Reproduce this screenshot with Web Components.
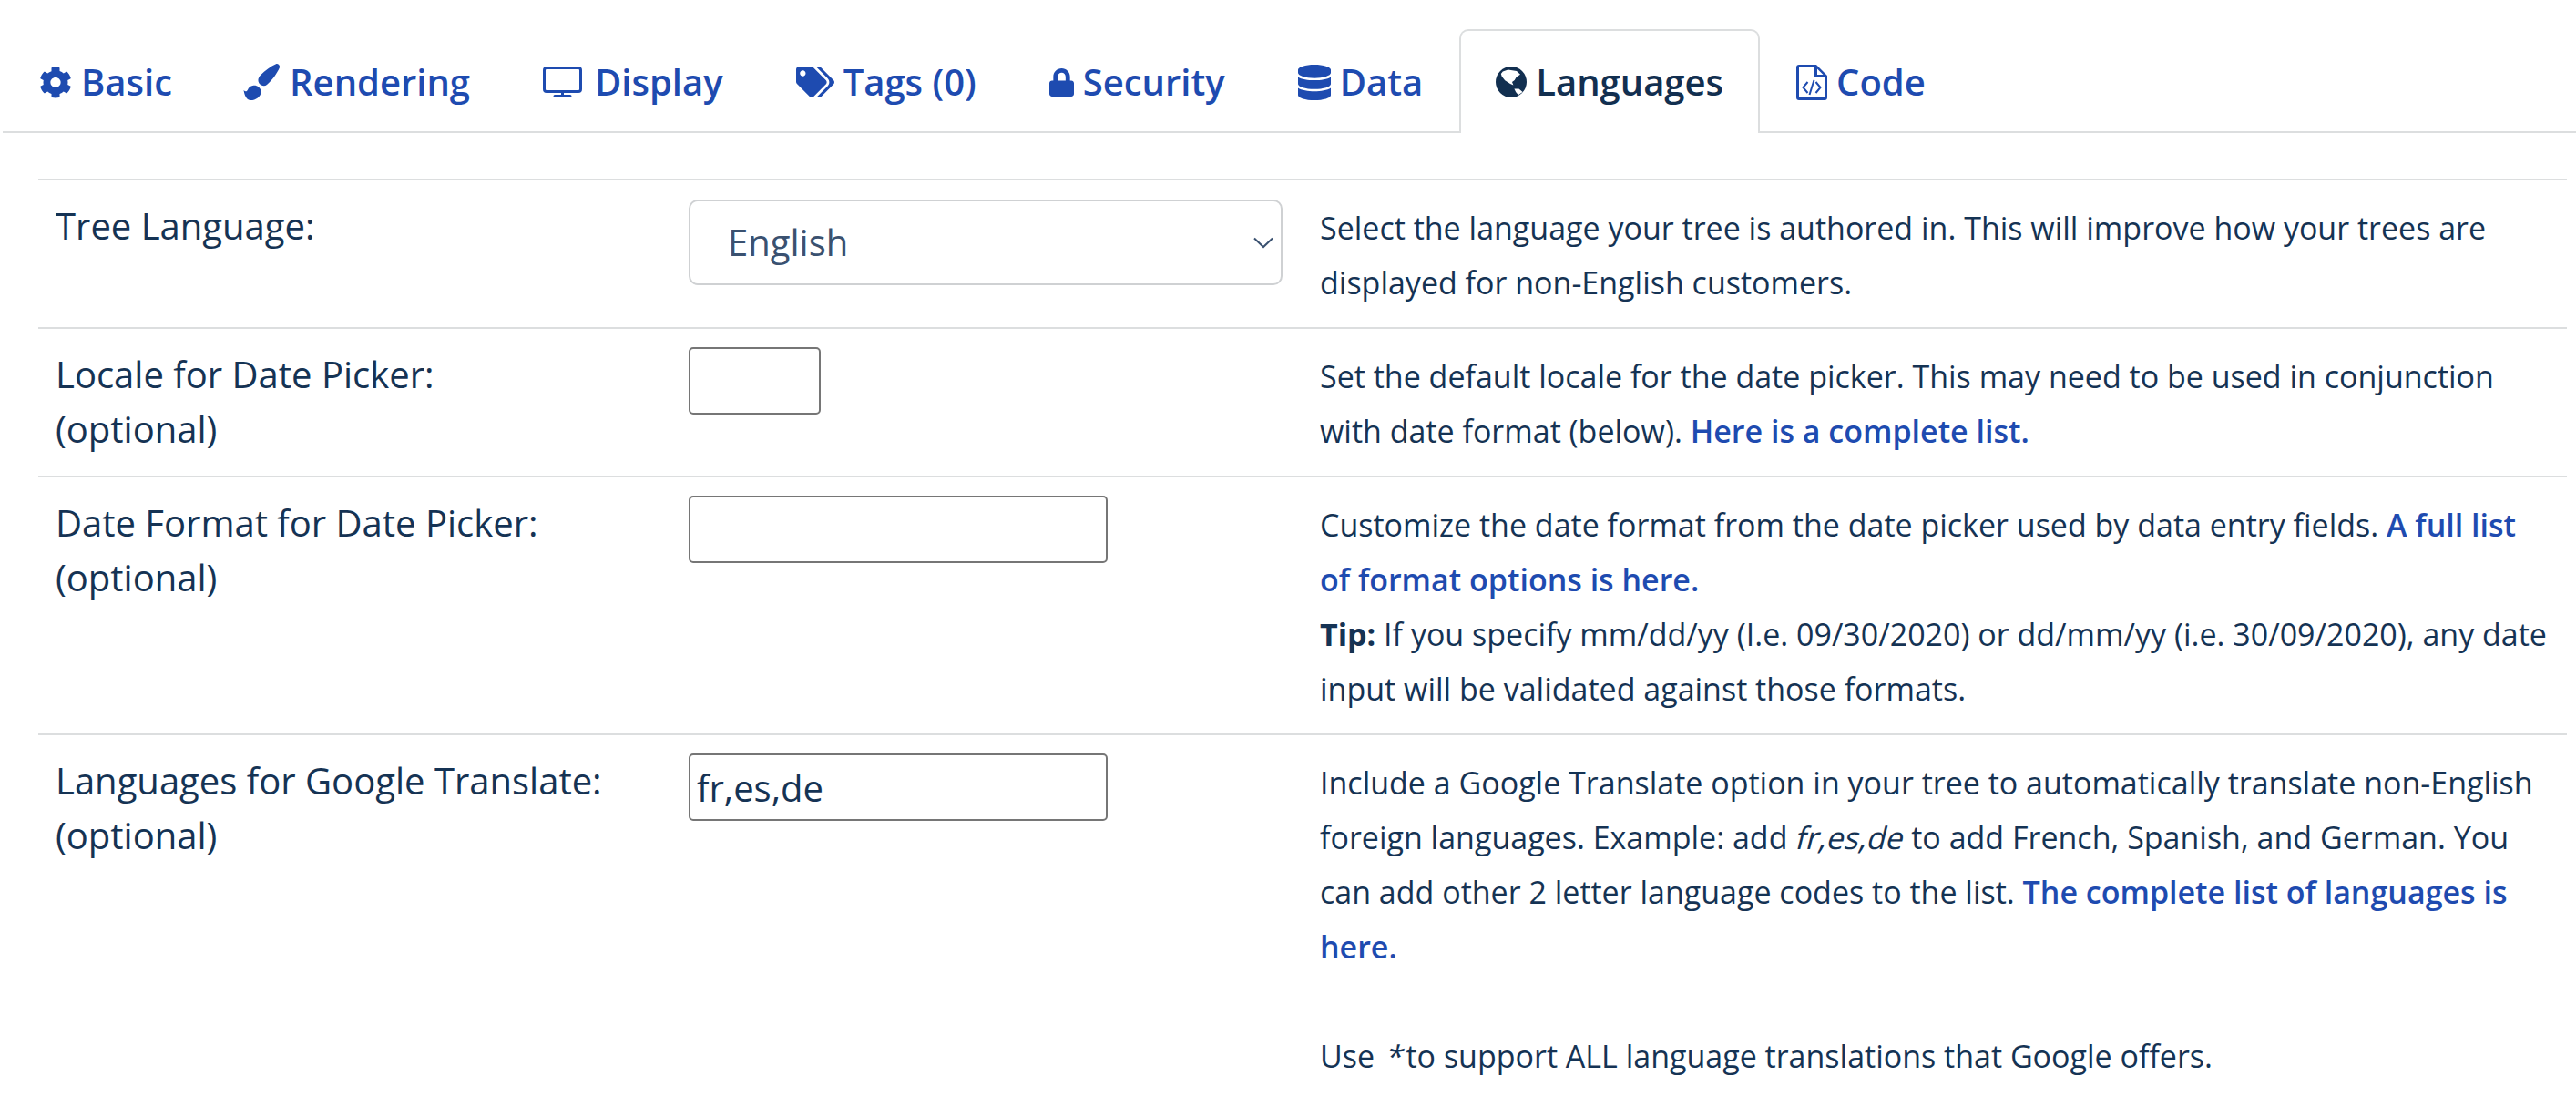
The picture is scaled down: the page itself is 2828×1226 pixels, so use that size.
<!DOCTYPE html>
<html>
<head>
<meta charset="utf-8">
<style>
    html, body { margin: 0; background: #fff; }
    body { font-family: "Open Sans", sans-serif; color: #153354; overflow: hidden; }
</style>
</head>
<body>
<settings-tabs>
    <tab-link icon="cog">Basic</tab-link>
    <tab-link icon="brush">Rendering</tab-link>
    <tab-link icon="desktop">Display</tab-link>
    <tab-link icon="tags">Tags (0)</tab-link>
    <tab-link icon="lock">Security</tab-link>
    <tab-link icon="database">Data</tab-link>
    <tab-link icon="globe" active>Languages</tab-link>
    <tab-link icon="code">Code</tab-link>
</settings-tabs>
<settings-table>
    <settings-row>
        <span slot="label">Tree Language:</span>
        <fake-select slot="field">English</fake-select>
        <span>Select the language your tree is authored in. This will improve how your trees are displayed for non-English customers.</span>
    </settings-row>
    <settings-row>
        <span slot="label">Locale for Date Picker:<br>(optional)</span>
        <text-field slot="field" width="145"></text-field>
        <span>Set the default locale for the date picker. This may need to be used in conjunction with date format (below). <help-link>Here is a complete list.</help-link></span>
    </settings-row>
    <settings-row>
        <span slot="label">Date Format for Date Picker:<br>(optional)</span>
        <text-field slot="field" width="460"></text-field>
        <span>Customize the date format from the date picker used by data entry fields. <help-link>A full list of format options is here.</help-link><br><b>Tip:</b> If you specify mm/dd/yy (I.e. 09/30/2020) or dd/mm/yy (i.e. 30/09/2020), any date input will be validated against those formats.</span>
    </settings-row>
    <settings-row>
        <span slot="label">Languages for Google Translate:<br>(optional)</span>
        <text-field slot="field" width="460" value="fr,es,de"></text-field>
        <span>Include a Google Translate option in your tree to automatically translate non-English foreign languages. Example: add <slant-text>fr,es,de</slant-text> to add French, Spanish, and German. You can add other 2 letter language codes to the list. <help-link>The complete list of languages is here.</help-link><br><br>Use&nbsp; <slant-text style="margin: 0 4px 0 -6px">*</slant-text>to support ALL language translations that Google offers.</span>
    </settings-row>
</settings-table>

<script>
// [viewBox, width, height, markup, extra svg margin]
const ICONS = {
    cog: ['0 0 512 512', 36, 35, '<path d="M487.4 315.7l-42.6-24.6c4.3-23.2 4.3-47 0-70.2l42.6-24.6c4.9-2.8 7.1-8.6 5.5-14-11.1-35.6-30-67.8-54.7-94.6-3.8-4.1-10-5.1-14.8-2.3L380.8 110c-17.9-15.4-38.5-27.3-60.8-35.1V25.8c0-5.6-3.9-10.5-9.4-11.7-36.7-8.2-74.3-7.8-109.2 0-5.5 1.2-9.4 6.1-9.4 11.7V75c-22.2 7.9-42.8 19.8-60.8 35.1L88.7 85.5c-4.9-2.8-11-1.9-14.8 2.3-24.7 26.7-43.6 58.9-54.7 94.6-1.7 5.4.6 11.2 5.5 14L67.3 221c-4.3 23.2-4.3 47 0 70.2l-42.6 24.6c-4.9 2.8-7.1 8.6-5.5 14 11.1 35.6 30 67.8 54.7 94.6 3.8 4.1 10 5.1 14.8 2.3l42.6-24.6c17.9 15.4 38.5 27.3 60.8 35.1v49.2c0 5.6 3.9 10.5 9.4 11.7 36.7 8.2 74.3 7.8 109.2 0 5.5-1.2 9.4-6.1 9.4-11.7v-49.2c22.2-7.9 42.8-19.8 60.8-35.1l42.6 24.6c4.9 2.8 11 1.9 14.8-2.3 24.7-26.7 43.6-58.9 54.7-94.6 1.5-5.5-.7-11.3-5.6-14.1zM256 336c-44.1 0-80-35.9-80-80s35.9-80 80-80 80 35.9 80 80-35.9 80-80 80z"/>'],
    brush: ['0 0 41 40', 41, 40, '<path d="M36 .3C38-.5 40.500 1.500 40 4 37 11 31 19 26 23 23.500 25 20 24.500 17.500 21.500 15.500 18.500 16.500 15 19 12.500 24 7.500 30 3 36 .3zM10.500 24C14.500 23 19 26 19.500 30 20 35.500 14 40 8 40 4.500 40 1.800 36.500.5 29 2.500 31 4 30.500 5 28.500 6 26 8 24.500 10.500 24z"/>', '0 0 0 -2px'],
    desktop: ['0 0 43 34', 43, 34, '<path fill-rule="evenodd" d="M4 0h35a4 4 0 0 1 4 4v21a4 4 0 0 1-4 4H23v2h7a1.500 1.500 0 0 1 0 3H13a1.500 1.500 0 0 1 0-3h7v-2H4a4 4 0 0 1-4-4V4a4 4 0 0 1 4-4zM4 3a1 1 0 0 0-1 1v21a1 1 0 0 0 1 1h35a1 1 0 0 0 1-1V4a1 1 0 0 0-1-1z"/>', '0 4px 0 0'],
    tags: ['0 0 640 512', 42, 34, '<path d="M497.941 225.941L286.059 14.059A48 48 0 0 0 252.118 0H48C21.49 0 0 21.49 0 48v204.118a48 48 0 0 0 14.059 33.941l211.882 211.882c18.744 18.745 49.136 18.746 67.882 0l204.118-204.118c18.745-18.745 18.745-49.137 0-67.882zM112 160c-26.51 0-48-21.49-48-48s21.49-48 48-48 48 21.49 48 48-21.49 48-48 48zm513.941 133.823L421.823 497.941c-18.745 18.745-49.137 18.745-67.882 0l-.36-.36L527.64 323.522c16.999-16.999 26.36-39.6 26.36-63.64s-9.362-46.641-26.36-63.64L331.397 0h48.721a48 48 0 0 1 33.941 14.059l211.882 211.882c18.745 18.745 18.745 49.137 0 67.882z"/>'],
    lock: ['0 0 448 512', 27, 31, '<path d="M400 224h-24v-72C376 68.2 307.8 0 224 0S72 68.2 72 152v72H48c-26.5 0-48 21.5-48 48v192c0 26.5 21.5 48 48 48h352c26.5 0 48-21.5 48-48V272c0-26.5-21.5-48-48-48zm-104 0H152v-72c0-39.7 32.3-72 72-72s72 32.3 72 72v72z"/>'],
    database: ['0 0 448 512', 36, 39, '<path d="M448 73.143v45.714C448 159.143 347.667 192 224 192S0 159.143 0 118.857V73.143C0 32.857 100.333 0 224 0s224 32.857 224 73.143zM448 176v102.857C448 319.143 347.667 352 224 352S0 319.143 0 278.857V176c48.125 33.143 136.208 48.572 224 48.572S399.874 209.143 448 176zm0 160v102.857C448 479.143 347.667 512 224 512S0 479.143 0 438.857V336c48.125 33.143 136.208 48.572 224 48.572S399.874 369.143 448 336z"/>'],
    globe: ['0 0 34 34', 34, 34, '<path fill-rule="evenodd" d="M17 0a17 17 0 1 1 0 34 17 17 0 0 1 0-34zM7.800 5.400L13.600 3.400 23 5 27 8.800 22.800 11.500 20.700 15 18 17 19.400 20.400 16 19 10.200 15.300 6.800 10.900 5.800 8zM20.400 24.500L25.500 24.500 29.600 27.900 24.800 31.300 22.100 27.900z"/>'],
    code: ['0 0 34 39', 34, 39, '<path fill-rule="evenodd" d="M3 0H22l12 12v24a3 3 0 0 1-3 3H3a3 3 0 0 1-3-3V3a3 3 0 0 1 3-3zM3 3v33h28V14H20V3zM23 4.500L29.500 11H23z"/><path fill="none" stroke="currentColor" stroke-width="2" d="M12.500 19L7.500 25l5 6M21.500 19l5 6-5 6M19.500 17l-5 16"/>']
};

class TabLink extends HTMLElement {

    constructor() {

        super();

        const icon = ICONS[this.getAttribute('icon')];

        this.attachShadow({mode: 'open'}).innerHTML = `
            <style>
                :host {
                    display: flex;
                    align-items: center;
                    gap: 10px;
                    height: 114px;
                    padding: 0 38px 2px;
                    box-sizing: border-box;
                    border: 2px solid transparent;
                    border-bottom: none;
                    border-radius: 10px 10px 0 0;
                    margin-bottom: -2px;
                    font-size: 40px;
                    font-weight: 600;
                    color: #1e4bb0;
                    white-space: nowrap;
                    cursor: pointer;
                }
                :host([active]) {
                    color: #122f50;
                    background: #fff;
                    border-color: #dcdedf;
                    position: relative;
                }
                svg { fill: currentColor; display: block; position: relative; top: 1px; margin: ${icon[4] || 0}; }
            </style>
            <svg viewBox="${icon[0]}" width="${icon[1]}" height="${icon[2]}" preserveAspectRatio="none">${icon[3]}</svg>
            <slot></slot>
        `;
    }
}

class SettingsTabs extends HTMLElement {

    constructor() {

        super();

        this.attachShadow({mode: 'open'}).innerHTML = `
            <style>
                :host {
                    display: flex;
                    margin: 32px 0 0 3px;
                    border-bottom: 2px solid #dcdedf;
                }
            </style>
            <slot></slot>
        `;
    }
}

class SettingsTable extends HTMLElement {

    constructor() {

        super();

        this.attachShadow({mode: 'open'}).innerHTML = `
            <style>
                :host {
                    display: block;
                    margin: 50px 10px 0 42px;
                    border-top: 2px solid #dcdedf;
                    font-size: 34px;
                }
            </style>
            <slot></slot>
        `;
    }
}

class SettingsRow extends HTMLElement {

    constructor() {

        super();

        this.attachShadow({mode: 'open'}).innerHTML = `
            <style>
                :host {
                    display: grid;
                    grid-template-columns: 694px 713px 1fr;
                    border-bottom: 2px solid #dcdedf;
                    line-height: 60px;
                }
                :host(:last-child) { border-bottom: none; }
                .label { padding: 20px 20px 0 19px; font-size: 40px; }
                .field { padding: 20px 20px 0; }
                .desc { padding: 22px 18px 19px 0; }
            </style>
            <div class="label"><slot name="label"></slot></div>
            <div class="field"><slot name="field"></slot></div>
            <div class="desc"><slot></slot></div>
        `;
    }
}

class FakeSelect extends HTMLElement {

    constructor() {

        super();

        this.attachShadow({mode: 'open'}).innerHTML = `
            <style>
                :host {
                    display: flex;
                    align-items: center;
                    justify-content: space-between;
                    width: 652px;
                    height: 94px;
                    margin-top: 1px;
                    box-sizing: border-box;
                    padding: 0 8px 0 41px;
                    border: 2px solid #cfd1d3;
                    border-radius: 10px;
                    font-size: 40px;
                    color: #3a5170;
                }
                svg { width: 22px; height: 13px; fill: none; stroke: #3a5170; stroke-width: 2; }
            </style>
            <slot></slot>
            <svg viewBox="0 0 22 13"><path d="M1 1.500l10 9.500 10-9.500"/></svg>
        `;
    }
}

class TextField extends HTMLElement {

    constructor() {

        super();

        const value = this.getAttribute('value') || '';

        this.attachShadow({mode: 'open'}).innerHTML = `
            <style>
                :host { display: block; }
                input {
                    display: block;
                    width: ${this.getAttribute('width')}px;
                    height: 74px;
                    box-sizing: border-box;
                    padding: 0 7px;
                    border: 2px solid #767676;
                    border-radius: 5px;
                    font: 40px "Open Sans", sans-serif;
                    color: #153354;
                    background: #fff;
                    outline: none;
                }
            </style>
            <input type="text" value="${value}">
        `;
    }
}

class HelpLink extends HTMLElement {

    constructor() {

        super();

        this.attachShadow({mode: 'open'}).innerHTML = `
            <style>
                :host { font-weight: 600; color: #1e4bb0; cursor: pointer; }
            </style>
            <slot></slot>
        `;
    }
}

// the reference slants the upright face rather than using the true italic
class SlantText extends HTMLElement {

    constructor() {

        super();

        this.attachShadow({mode: 'open'}).innerHTML = `
            <style>
                :host { display: inline-block; transform: translateX(2px) skewX(-14deg); }
            </style>
            <slot></slot>
        `;
    }
}

window.customElements.define('tab-link', TabLink);
window.customElements.define('settings-tabs', SettingsTabs);
window.customElements.define('settings-table', SettingsTable);
window.customElements.define('settings-row', SettingsRow);
window.customElements.define('fake-select', FakeSelect);
window.customElements.define('text-field', TextField);
window.customElements.define('help-link', HelpLink);
window.customElements.define('slant-text', SlantText);
</script>
</body>
</html>
